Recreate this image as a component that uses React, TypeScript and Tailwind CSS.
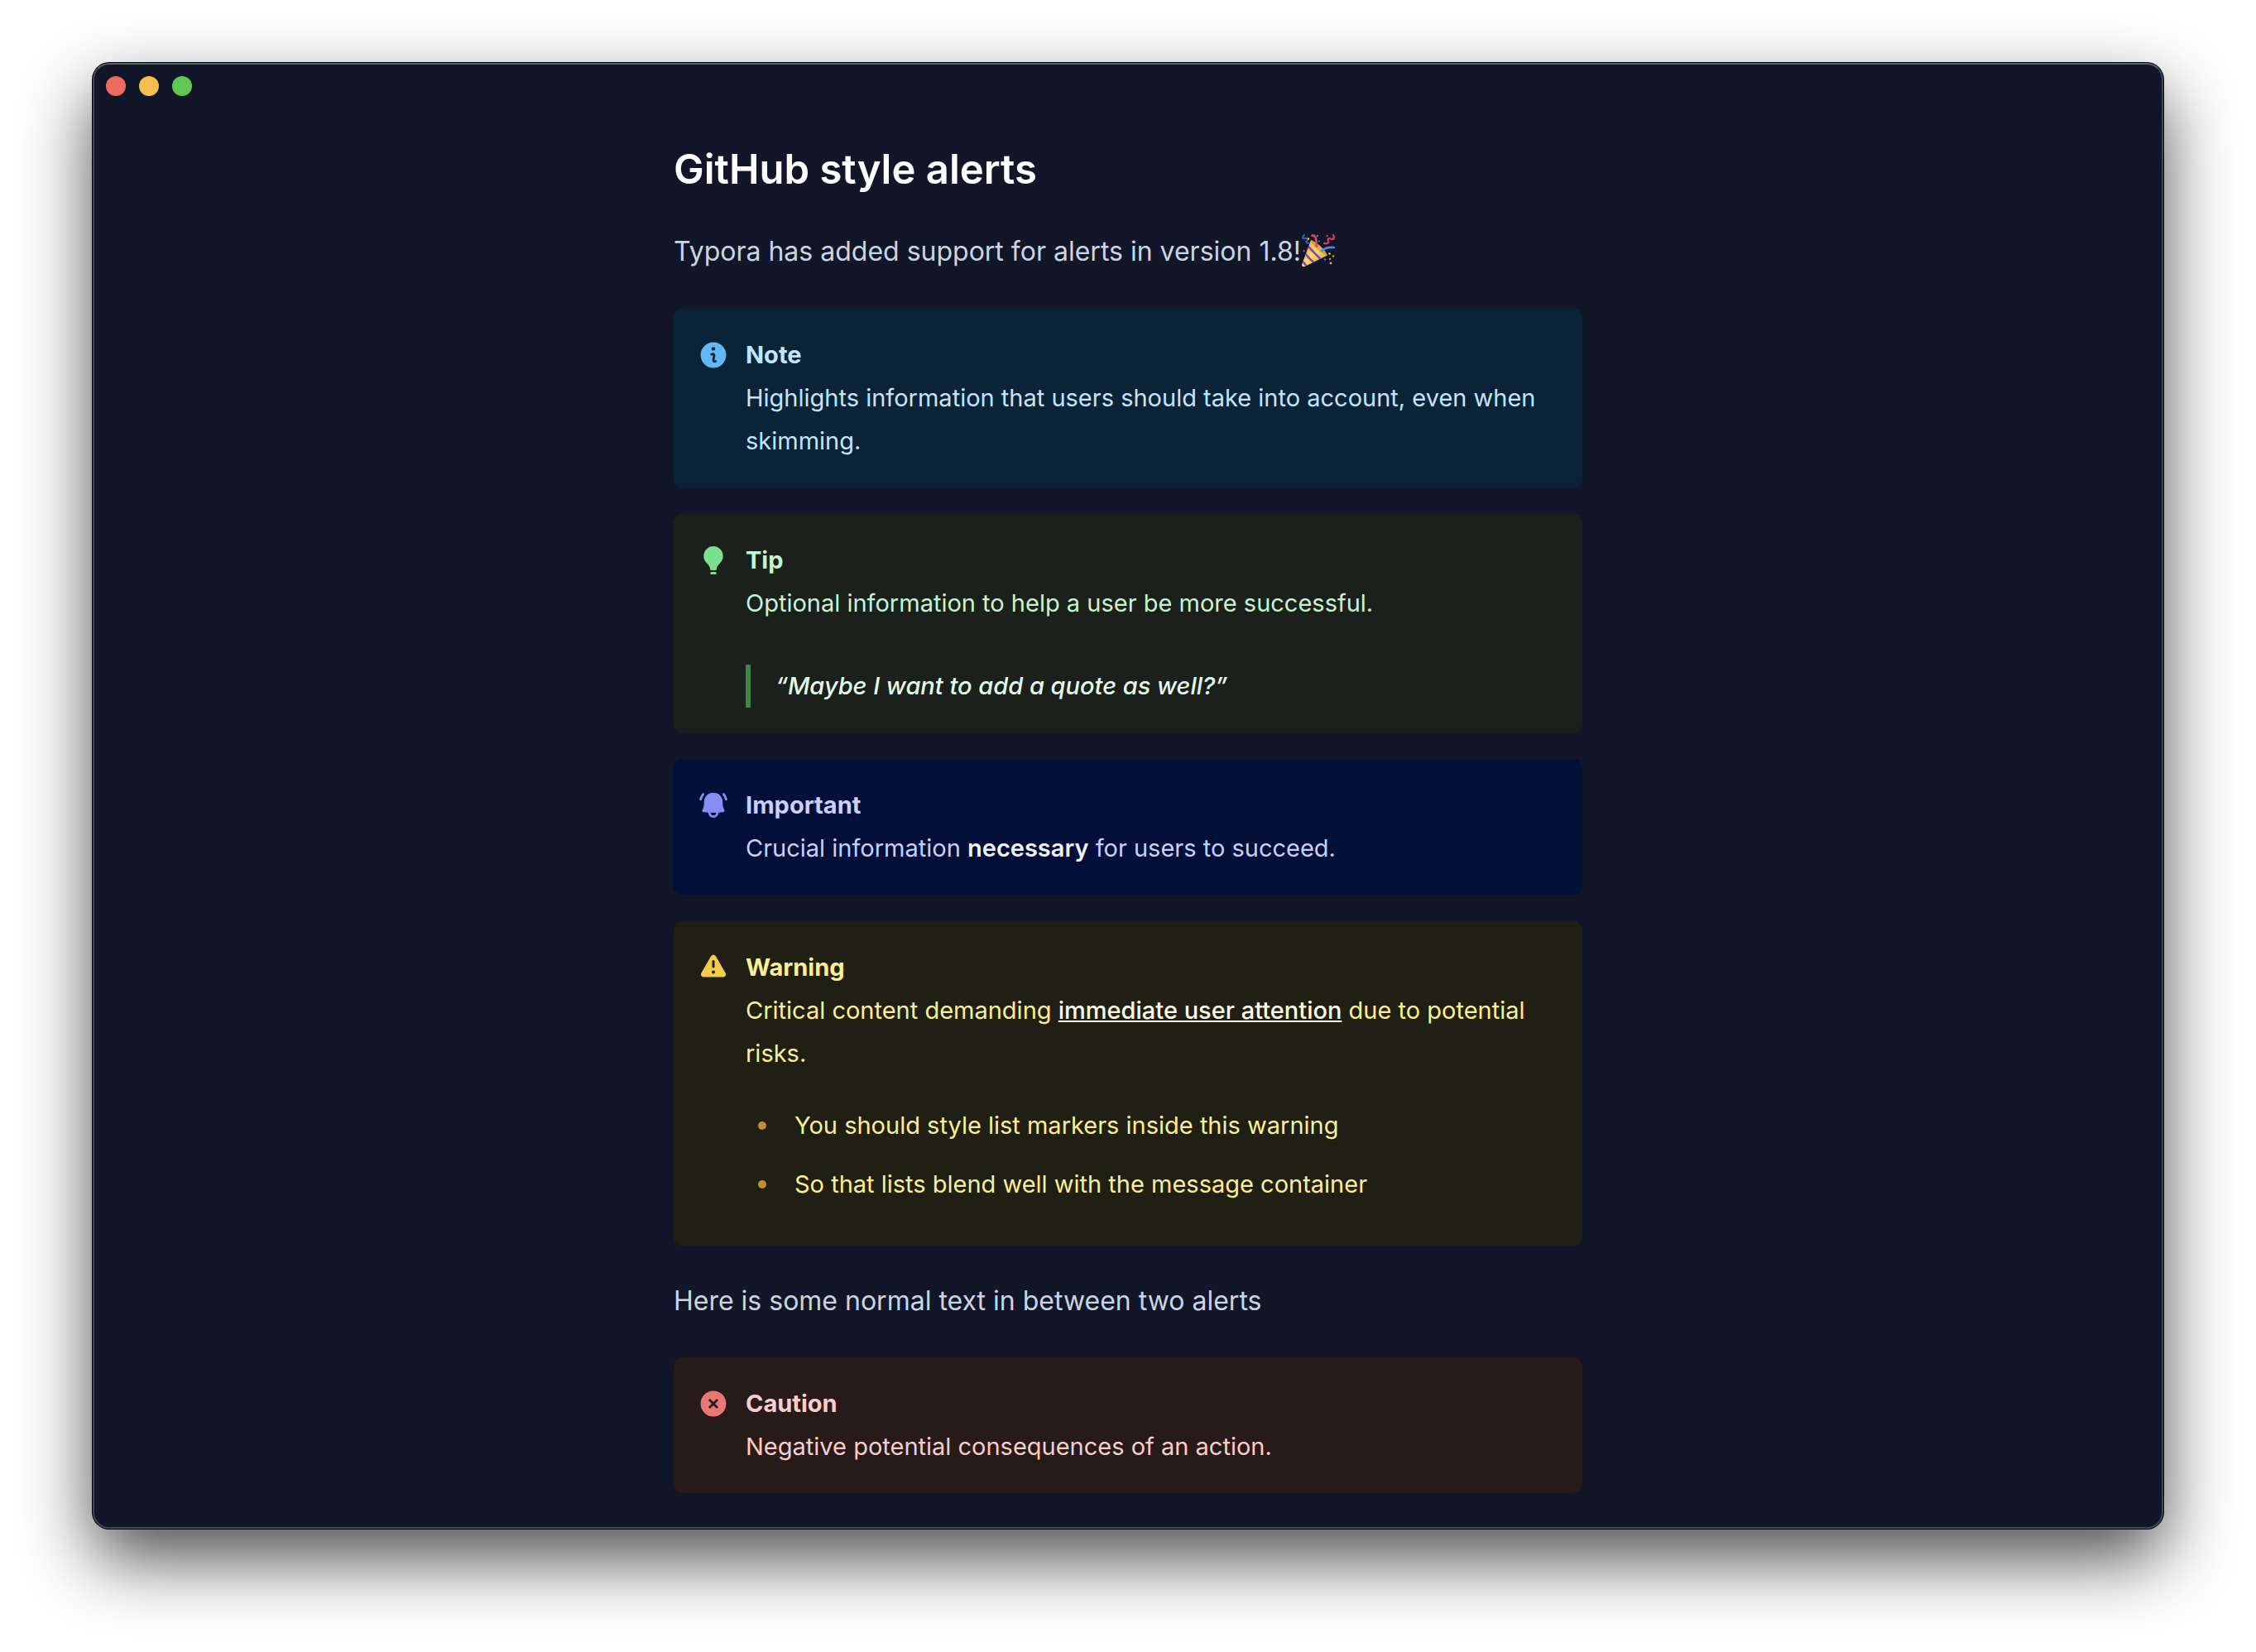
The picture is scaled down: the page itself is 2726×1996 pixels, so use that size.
import React from "react";

function InfoIcon() {
  return (
    <svg viewBox="0 0 32 32" className="size-8" aria-hidden="true">
      <circle cx="16" cy="16" r="15.4" fill="#62b8f3" />
      <circle cx="16" cy="8.4" r="2.2" fill="#0b2337" />
      <path d="M13.800 15.200c1.800-1 3.400 0 3.100 1.700l-.9 4.300c-.3 2 .9 2.900 2.700 2.300" fill="none" stroke="#0b2337" strokeWidth="2.800" strokeLinecap="round" strokeLinejoin="round" />
    </svg>
  );
}

function BulbIcon() {
  return (
    <svg viewBox="0 0 32 36" className="h-9 w-8" aria-hidden="true">
      <path d="M16 1a11.700 11.700 0 0 1 11.700 11.700c0 4.600-2.300 7.200-4.700 9.800-1.800 2-2.900 3.600-3.100 6-.1 1-.6 1.500-1.500 1.500h-4.800c-.9 0-1.400-.5-1.500-1.500-.2-2.400-1.300-4-3.100-6-2.400-2.600-4.700-5.200-4.700-9.800A11.700 11.700 0 0 1 16 1z" fill="#7bdf8e" />
      <rect x="12.300" y="32" width="7.400" height="3" rx="1.500" fill="#7bdf8e" />
    </svg>
  );
}

function BellIcon() {
  return (
    <svg viewBox="0 0 36 32" className="h-8 w-9" aria-hidden="true">
      <path d="M18 .8c-6.400 0-11 4.600-11.200 10.800-.2 5.400-.5 7-2 9.900-.9 1.700 0 2.600 1.800 2.800 7.600.8 15.200.8 22.800 0 1.800-.2 2.700-1.100 1.800-2.800-1.500-2.900-1.800-4.500-2-9.900C29 5.400 24.400.8 18 .8z" fill="#858df5" />
      <path d="M13 24c.2 3.600 2.200 5.600 5 5.600s4.800-2 5-5.600" fill="none" stroke="#858df5" strokeWidth="2.800" />
      <path d="M5.600 2.600C4.300 4.300 3.200 6.300 2.600 8.800M30.400 2.600c1.300 1.700 2.400 3.700 3 6.200" fill="none" stroke="#858df5" strokeWidth="2.800" strokeLinecap="round" />
    </svg>
  );
}

function WarningIcon() {
  return (
    <svg viewBox="0 0 32 32" className="size-8" aria-hidden="true">
      <path d="M13 2.500c1.300-2.200 4.700-2.200 6 0l11.600 19.900c1.300 2.200-.3 5-2.900 5H4.300c-2.600 0-4.200-2.800-2.900-5z" fill="#f3cc4c" />
      <path d="M16 8.600v6.400" stroke="#201f14" strokeWidth="3" strokeLinecap="round" />
      <circle cx="16" cy="21.500" r="2" fill="#201f14" />
    </svg>
  );
}

function CautionIcon() {
  return (
    <svg viewBox="0 0 32 32" className="size-8" aria-hidden="true">
      <circle cx="16" cy="16" r="15.400" fill="#e77873" />
      <path d="M11.700 11.700l8.600 8.600M20.300 11.700l-8.600 8.600" stroke="#271b19" strokeWidth="2.800" strokeLinecap="round" />
    </svg>
  );
}

function PartyPopper() {
  return (
    <svg viewBox="0 0 42 42" className="-my-3 inline-block size-[42px] align-[3px]" role="img" aria-label="Party popper">
      <defs>
        <linearGradient id="cone" x1="0" y1="0" x2="1" y2="1">
          <stop offset="0" stopColor="#d9992c" />
          <stop offset=".5" stopColor="#fbdc5e" />
          <stop offset="1" stopColor="#d08f22" />
        </linearGradient>
        <clipPath id="coneClip">
          <path d="M12 8c6 2 17 11 20 18.500L4.500 40c-2.500 1-4-.5-3.200-3z" />
        </clipPath>
      </defs>
      <path d="M12 8c6 2 17 11 20 18.500L4.500 40c-2.500 1-4-.5-3.200-3z" fill="url(#cone)" />
      <g clipPath="url(#coneClip)" fill="none" stroke="#8a3fc8" strokeWidth="2.600">
        <path d="M8 15c5 5 11 12 16 16" />
        <path d="M5 24c3 4 7 9 11 11" />
        <path d="M1 33c2 2 4 4 6 7" />
      </g>
      <path d="M12 8c7 2 17 11 20 18.500-6-1-19-11-20-18.500z" fill="#b9812a" opacity=".45" />
      <path d="M13.500 2.500c5-.5 5 6 5.500 13" fill="none" stroke="#d8455f" strokeWidth="2.800" strokeLinecap="round" />
      <path d="M25 21c4-4 9-4.500 15-4" fill="none" stroke="#4a86e8" strokeWidth="2.600" strokeLinecap="round" />
      <path d="M4 2c-3 3-2 5 1 4s4 2 1 4c1 2 3 2 4 2" fill="none" stroke="#2f62c8" strokeWidth="2" strokeLinecap="round" />
      <path d="M39 2c2 4 0 6-3 4.500s-4 0-3 3-3 3-5 2.500" fill="none" stroke="#cf3d5c" strokeWidth="2.400" strokeLinecap="round" />
      <g>
        <circle cx="9" cy="6.500" r="1.200" fill="#f5d442" />
        <circle cx="20" cy="3" r="1.200" fill="#3f7fe0" />
        <circle cx="22" cy="9.500" r="1.100" fill="#3f7fe0" />
        <circle cx="31.500" cy="3" r="1.200" fill="#cf3d5c" />
        <circle cx="3.500" cy="21" r="1.200" fill="#cf3d5c" />
        <circle cx="34.500" cy="24.500" r="1.300" fill="#f5d442" />
        <circle cx="39" cy="27.500" r="1.300" fill="#d99a33" />
        <circle cx="35" cy="31" r="1.200" fill="#e28a3d" />
        <circle cx="29" cy="31.500" r="1.200" fill="#3f6fd0" />
        <circle cx="36" cy="36" r="1.400" fill="#e79ac0" />
      </g>
    </svg>
  );
}

interface AlertProps {
  title: string;
  icon: React.ReactNode;
  className: string;
  children: React.ReactNode;
}

function Alert({ title, icon, className, children }: AlertProps) {
  return (
    <section className={`flex gap-[21px] rounded-[10px] py-[30px] pr-8 pl-[30px] text-[29px] leading-[52px] ${className}`}>
      <div className="flex h-[52px] w-9 shrink-0 items-center justify-center">{icon}</div>
      <div className="min-w-0 flex-1">
        <h3 className="font-bold">{title}</h3>
        {children}
      </div>
    </section>
  );
}

export default function App() {
  return (
    <div className="min-h-screen bg-white px-28 pt-[76px] pb-[147px] font-['Inter',sans-serif] font-normal">
      <main className="overflow-hidden rounded-[20px] border-2 border-[#414556] border-t-[#5c606c] bg-[#111628] shadow-[0_0_0_1px_#000,0_36px_86px_rgba(0,0,0,0.7)]">
        <header className="flex gap-4 px-[14px] pt-[14px]">
          <button type="button" aria-label="Close" className="size-6 rounded-full bg-[#ed6a5f]" />
          <button type="button" aria-label="Minimize" className="size-6 rounded-full bg-[#f5bf4f]" />
          <button type="button" aria-label="Zoom" className="size-6 rounded-full bg-[#62c655]" />
        </header>
        <article className="mx-auto max-w-[1098px] pt-[55px] pb-[41px]">
          <h2 className="text-[49px] leading-[68px] font-semibold text-white">GitHub style alerts</h2>
          <p className="mt-9 mb-10 text-[32px] leading-[58px] text-[#cbd5e1]">
            Typora has added support for alerts in version 1.8!
            <PartyPopper />
          </p>
          <div className="flex flex-col gap-8">
            <Alert title="Note" icon={<InfoIcon />} className="bg-[#0b2337] text-[#c3e5fb]">
              <p>Highlights information that users should take into account, even when skimming.</p>
            </Alert>
            <Alert title="Tip" icon={<BulbIcon />} className="bg-[#1b201d] text-[#c5f5cf]">
              <p>Optional information to help a user be more successful.</p>
              <blockquote className="mt-12 border-l-6 border-[#3f8548] pl-[30px] font-medium text-[#e2fbe7] italic">
                “Maybe I want to add a quote as well?”
              </blockquote>
            </Alert>
            <Alert title="Important" icon={<BellIcon />} className="bg-[#020f38] text-[#c9d1fb]">
              <p>
                Crucial information <strong className="font-semibold text-[#f0f2fe]">necessary</strong> for users to succeed.
              </p>
            </Alert>
            <Alert title="Warning" icon={<WarningIcon />} className="bg-[#201f14] text-[#fbef96]">
              <p>
                Critical content demanding{" "}
                <a href="#attention" className="font-medium text-[#fefce8] underline">immediate user attention</a> due to potential risks.
              </p>
              <ul className="mt-[35px] mb-[18px] flex flex-col gap-[19px]">
                {["You should style list markers inside this warning", "So that lists blend well with the message container"].map((item) => (
                  <li key={item} className="flex items-center gap-[34px] pl-[15px]">
                    <span className="size-[10px] shrink-0 rounded-full bg-[#c28c33]" />
                    {item}
                  </li>
                ))}
              </ul>
            </Alert>
          </div>
          <p className="mt-[38px] mb-[39px] text-[32px] leading-[58px] text-[#cbd5e1]">Here is some normal text in between two alerts</p>
          <Alert title="Caution" icon={<CautionIcon />} className="bg-[#271b19] text-[#f8cdcc]">
            <p>Negative potential consequences of an action.</p>
          </Alert>
        </article>
      </main>
    </div>
  );
}
